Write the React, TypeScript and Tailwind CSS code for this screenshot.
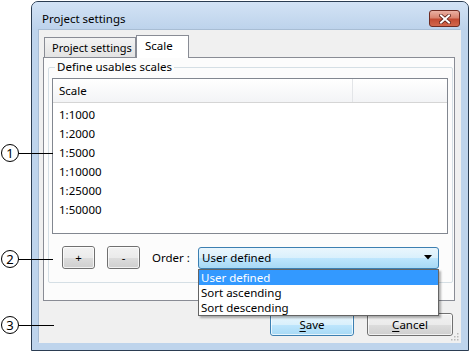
import React from 'react'

const scales = ['1:1000', '1:2000', '1:5000', '1:10000', '1:25000', '1:50000']
const orders = ['User defined', 'Sort ascending', 'Sort descending']

function Callout({ n, top, lineEnd }: { n: string; top: number; lineEnd: number }) {
    return (
        <div className="absolute left-[1px] flex items-center" style={{ top }}>
            <div className="w-[18px] h-[18px] rounded-full border border-black flex items-center justify-center text-[13px] leading-none bg-white">
                {n}
            </div>
            <div className="h-px bg-black" style={{ width: lineEnd - 19 }} />
        </div>
    )
}

function WinButton({ children, isDefault, className }: { children: React.ReactNode; isDefault?: boolean; className?: string }) {
    return (
        <div
            className={
                'h-[23px] rounded-[3px] border flex items-center justify-center text-[11.5px] ' +
                (isDefault
                    ? 'border-[#3c7fb1] bg-[linear-gradient(#eaf6fd_0%,#d9f0fc_50%,#bee6fd_51%,#a7d9f5_100%)] '
                    : 'border-[#707070] bg-[linear-gradient(#f2f2f2_0%,#ebebeb_50%,#dddddd_51%,#cfcfcf_100%)] ') +
                (className ?? '')
            }
        >
            <div className="w-full h-full rounded-[2px] border border-white/70 flex items-center justify-center">{children}</div>
        </div>
    )
}

export default function App() {
    return (
        <div className="w-[470px] h-[351px] bg-white relative overflow-hidden font-['Noto_Sans',sans-serif] text-black">
            <div className="pl-[31px] pt-[1px]">
                {/* window */}
                <div className="w-[438px] h-[350px] flex flex-col rounded-t-[7px] border border-[#2b3d52] bg-[#bed4ec] overflow-hidden">
                    <div className="h-[28px] flex items-start justify-between pl-[10px] pr-[8px] bg-[linear-gradient(#d3e3f5,#bcd2eb)]">
                        <span className="text-[11.5px] leading-none mt-[11px]">Project settings</span>
                        <div className="mt-[8px] w-[31px] h-[17px] rounded-[3px] border border-[#6e2b22] bg-[linear-gradient(#eab0a3_0%,#d98470_45%,#c24a32_55%,#d2674c_100%)] flex items-center justify-center">
                            <svg width="12" height="10" viewBox="0 0 12 10">
                                <path d="M2 1.5 L10 8.5 M10 1.5 L2 8.5" stroke="#5a1e16" strokeWidth="3.6" strokeLinecap="square" />
                                <path d="M2 1.5 L10 8.5 M10 1.5 L2 8.5" stroke="#ffffff" strokeWidth="2" strokeLinecap="square" />
                            </svg>
                        </div>
                    </div>

                    {/* client area */}
                    <div className="mx-[7px] h-[313px] bg-[#f0f0f0] shadow-[-1px_-1px_0_#a8bdd4] relative flex flex-col">
                        {/* tab strip */}
                        <div className="h-[27px] flex items-end pl-[5px]">
                            <div className="w-[92px] h-[20px] border border-b-0 border-[#898c95] bg-[linear-gradient(#f3f3f3,#e3e3e3)] text-[11px] pl-[7px] leading-[19px] whitespace-nowrap">
                                Project settings
                            </div>
                            <div className="relative z-10 -mb-px w-[53px] h-[23px] border border-b-0 border-[#898c95] bg-white text-[11.5px] pl-[8px] leading-[20px]">
                                Scale
                            </div>
                        </div>

                        {/* tab panel */}
                        <div className="ml-[4px] w-[412px] h-[244px] border border-[#898c95] bg-[#fcfcfc] pt-[9px] pl-[4px] pr-[1px]">
                            <div className="relative h-[216px] border border-[#d5dfe5] rounded-[2px] pt-[10px] pl-[3px] pr-[4px]">
                                <span className="absolute left-[6px] top-[-10px] px-[2px] bg-[#fcfcfc] text-[11.5px] leading-[18px] whitespace-nowrap">
                                    Define usables scales
                                </span>
                                {/* list */}
                                <div className="h-[156px] border border-[#828790] bg-white">
                                    <div className="h-[24px] flex border-b border-[#d5d5d5] bg-[linear-gradient(#ffffff,#f3f4f6)]">
                                        <div className="w-[300px] border-r border-[#e3e5e8] pl-[6px] text-[11.5px] leading-[23px]">Scale</div>
                                    </div>
                                    <div className="pt-[2px] pl-[6px]">
                                        {scales.map(s => (
                                            <div key={s} className="h-[19px] text-[11.5px] leading-[19px]">
                                                {s}
                                            </div>
                                        ))}
                                    </div>
                                </div>

                                {/* controls */}
                                <div className="mt-[12px] flex items-center pl-[10px]">
                                    <WinButton className="w-[33px]">+</WinButton>
                                    <WinButton className="w-[33px] ml-[12px]">-</WinButton>
                                    <span className="ml-[12px] w-[46px] text-[11.5px] whitespace-nowrap">Order :</span>
                                    <div className="relative">
                                        <div className="w-[241px] h-[22px] rounded-[3px] border border-[#3c7fb1] bg-[linear-gradient(#eaf6fd_0%,#d9f0fc_50%,#bee6fd_51%,#a7d9f5_100%)] flex items-center justify-between pl-[3px] pr-[6px] text-[11.5px]">
                                            <span>User defined</span>
                                            <svg width="8" height="5" viewBox="0 0 8 5">
                                                <path d="M0 0 H8 L4 4.5 Z" fill="#000" />
                                            </svg>
                                        </div>
                                        {/* open dropdown list */}
                                        <div className="absolute left-0 top-[22px] z-20 w-[241px] border border-[#646464] bg-white shadow-[2px_2px_2px_rgba(0,0,0,0.3)]">
                                            {orders.map((o, i) => (
                                                <div
                                                    key={o}
                                                    className={
                                                        i === 0
                                                            ? 'h-[15px] text-[11.5px] leading-[15px] pl-[2px] bg-[#3399ff] text-white'
                                                            : 'h-[15px] text-[11.5px] leading-[15px] pl-[2px]'
                                                    }
                                                >
                                                    {o}
                                                </div>
                                            ))}
                                        </div>
                                    </div>
                                </div>
                            </div>
                        </div>

                        {/* bottom buttons */}
                        <div className="mt-[12px] flex pl-[231px]">
                            <WinButton isDefault className="w-[84px]">
                                <span className="underline underline-offset-2">S</span>ave
                            </WinButton>
                            <WinButton className="w-[86px] ml-[13px]">
                                <span className="underline underline-offset-2">C</span>ancel
                            </WinButton>
                        </div>
                        <svg className="absolute right-[2px] bottom-[2px]" width="10" height="10" viewBox="0 0 10 10">
                            {[
                                [8, 2],
                                [5, 5],
                                [8, 5],
                                [2, 8],
                                [5, 8],
                                [8, 8],
                            ].map(([x, y]) => (
                                <rect key={x + '-' + y} x={x} y={y} width="1.5" height="1.5" fill="#b8b8b8" />
                            ))}
                        </svg>
                    </div>
                </div>
            </div>

            <Callout n="1" top={144} lineEnd={53} />
            <Callout n="2" top={250} lineEnd={53} />
            <Callout n="3" top={316} lineEnd={54} />
        </div>
    )
}
